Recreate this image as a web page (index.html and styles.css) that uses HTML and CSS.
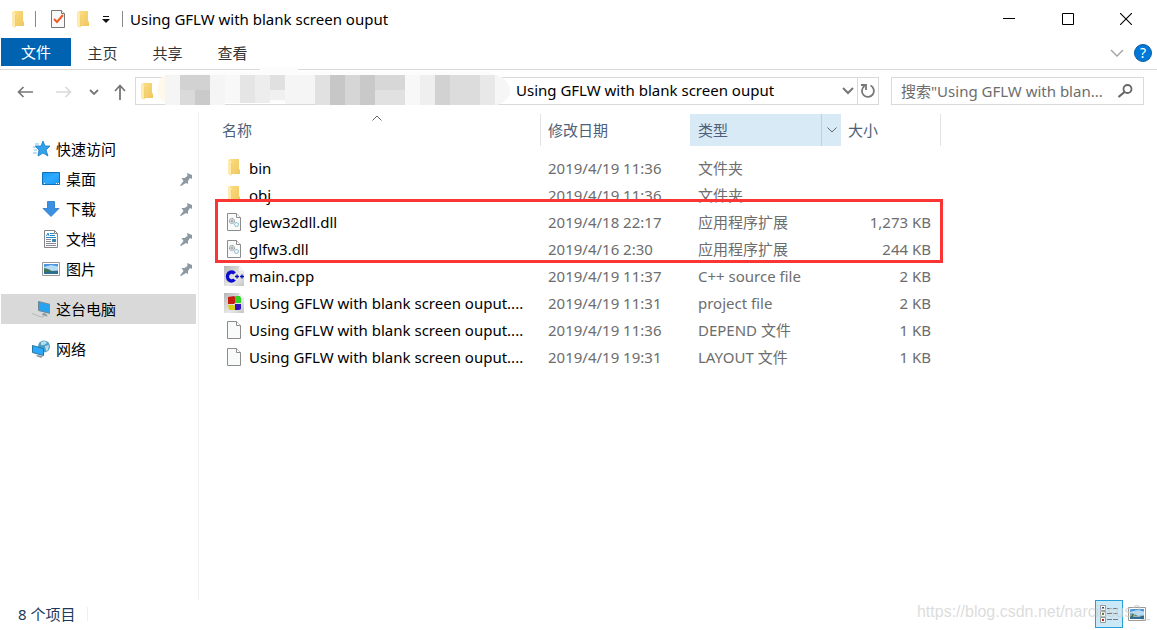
FILE: index.html
```html
<!DOCTYPE html>
<html lang="zh-CN">
<head>
<meta charset="utf-8">
<title>Using GFLW with blank screen ouput</title>
<link rel="stylesheet" href="styles.css">
</head>
<body>
<svg class="defs" aria-hidden="true">
  <defs>
    <linearGradient id="gold" x1="0" x2="1" y1="0" y2="1"><stop offset="0" stop-color="#fbdc80"/><stop offset="1" stop-color="#efc75f"/></linearGradient>
    <linearGradient id="blue" x1="0" x2="1" y1="0" y2="1"><stop offset="0" stop-color="#1199fb"/><stop offset=".5" stop-color="#2fa9ff"/><stop offset="1" stop-color="#1596f5"/></linearGradient>
    <linearGradient id="grey" x1="0" x2="1" y1="0" y2="1"><stop offset="0" stop-color="#b5b5b5"/><stop offset=".6" stop-color="#e9e9e9"/><stop offset="1" stop-color="#c4c4c4"/></linearGradient>
    <symbol id="folder" viewBox="0 0 14 18"><path d="M3 1h9v10l1 1v4H3z" fill="url(#gold)"/><path d="M1 1l2 1 2 2v12l-1 2-3-2z" fill="#ffe9ae"/><path d="M4 4l1 1v11l-1 1z" fill="#f3cf73"/></symbol>
    <symbol id="page" viewBox="0 0 16 20"><path d="M1.500 1.500h9l4 4v13h-13z" fill="#f9fafa" stroke="#8c8c8c"/><path d="M10.500 1.500v4h4" fill="#fff" stroke="#8c8c8c"/></symbol>
    <symbol id="dll" viewBox="0 0 16 20"><use href="#page" width="16" height="20"/><circle cx="6" cy="9" r="2.600" fill="#e8ecee" stroke="#7c858b" stroke-dasharray="1.200 .5"/><circle cx="6" cy="9" r="1" fill="#fff" stroke="#798288" stroke-width=".8"/><circle cx="10.500" cy="12.500" r="2" fill="#e2f2f8" stroke="#6faac5" stroke-dasharray="1.200 .4"/><circle cx="10.500" cy="12.500" r=".7" fill="#fff"/></symbol>
    <symbol id="cpp" viewBox="0 0 20 20"><path d="M0 0h15l5 5v15H0z" fill="url(#grey)"/><path d="M15 0v5h5z" fill="#f4f4f4"/><path d="M10.500 7.500A4 4.500 0 1 0 10.500 13.500" fill="none" stroke="#0d0dd0" stroke-width="3.400"/><path d="M11 10.500h4m-2-2v4m3-2h4m-2-2v4" stroke="#0d0dc0" stroke-width="1.300"/></symbol>
    <symbol id="project" viewBox="0 0 20 20"><path d="M0 0h15l5 5v15H0z" fill="url(#grey)"/><path d="M15 0v5h5z" fill="#f4f4f4"/><path d="M4 4l6-1 1 1v6l-1 1H4z" fill="#c81c10"/><path d="M11 3l5 0 1 2v5h-6z" fill="#32d428"/><path d="M4 12h6l1 1v4l-6 0z" fill="#d5cf18"/><path d="M11 11h6v5l-2 1h-4z" fill="#3114bd"/></symbol>
    <symbol id="pin" viewBox="0 0 14 14"><path d="M8 1l5 2v4l-2-1-2 3v3L7 11 2 14l-1-.500L4.500 9 2.500 6l3 0L8.500 4z" fill="#8c99a2"/></symbol>
    <symbol id="picture" viewBox="0 0 18 14"><path d="M.5.500h17v13H.5z" fill="#fff" stroke="#999"/><path d="M2 2h14v10H2z" fill="#b5dcf6"/><path d="M2 2h14v2.500L9 3 2 5z" fill="#4c95df"/><path d="M2 6l4 1 4 2 6-.5V10H2z" fill="#42745c"/><path d="M2 10l14-1v3H2z" fill="#2d6e93"/></symbol>
  </defs>
</svg>

<div class="window">
  <header class="titlebar">
    <svg class="i-folder"><use href="#folder"/></svg>
    <span class="sep first"></span>
    <button class="plain" aria-label="属性"><svg class="i-page" viewBox="0 0 16 20"><path d="M1.500 1.500h10l3 3v14h-13z" fill="#f8f8f8" stroke="#777"/><path d="M11.500 1.500v3h3" fill="#fff" stroke="#777"/><path d="M4 10l3 3 6-7" fill="none" stroke="#f15a22" stroke-width="2"/></svg></button>
    <button class="plain new-folder" aria-label="新建文件夹"><svg class="i-folder"><use href="#folder"/></svg></button>
    <button class="plain quick" aria-label="自定义快速访问工具栏"><svg width="8" height="8" viewBox="0 0 8 8"><path d="M1 1h6v1H1zM0 4h8L4 8z" fill="#111"/></svg></button>
    <span class="sep last"></span>
    <h1>Using GFLW with blank screen ouput</h1>
    <div class="controls">
      <button class="plain" aria-label="最小化"><svg viewBox="0 0 12 12"><path d="M0 5.500h12" stroke="#000"/></svg></button>
      <button class="plain" aria-label="最大化"><svg viewBox="0 0 12 12"><path d="M.5.500h11v11H.5z" fill="none" stroke="#000"/></svg></button>
      <button class="plain" aria-label="关闭"><svg viewBox="0 0 12 12"><path d="M0 0l12 12M12 0L0 12" stroke="#000" stroke-width="1.100"/></svg></button>
    </div>
  </header>

  <nav class="ribbon" aria-label="功能区">
    <button class="file">文件</button>
    <button>主页</button>
    <button>共享</button>
    <button>查看</button>
    <div class="ribbon-end">
      <button class="plain" aria-label="展开功能区"><svg width="14" height="8" viewBox="0 0 14 8"><path d="M1 1l6 6 6-6" fill="none" stroke="#a0a0a0" stroke-width="1.300"/></svg></button>
      <button class="help" aria-label="帮助">?</button>
    </div>
  </nav>

  <div class="navbar">
    <div class="arrows">
      <button class="plain" aria-label="后退"><svg width="16" height="12" viewBox="0 0 16 12"><path d="M16 6H1.500M6.500 1l-5 5 5 5" fill="none" stroke="#777" stroke-width="1.700"/></svg></button>
      <button class="plain" aria-label="前进"><svg width="16" height="12" viewBox="0 0 16 12"><path d="M0 6h14.500M9.500 1l5 5-5 5" fill="none" stroke="#d9d9d9" stroke-width="1.700"/></svg></button>
      <button class="plain recent" aria-label="最近浏览的位置"><svg width="10" height="6" viewBox="0 0 10 6"><path d="M1 1l4 4 4-4" fill="none" stroke="#777" stroke-width="1.800"/></svg></button>
      <button class="plain up" aria-label="上移"><svg width="12" height="16" viewBox="0 0 12 16"><path d="M6 16V1.500M1 7l5-5.500L11 7" fill="none" stroke="#777" stroke-width="1.800"/></svg></button>
    </div>
    <div class="address">
      <svg class="i-folder"><use href="#folder"/></svg>
      <svg class="mosaic" viewBox="0 0 350 38" shape-rendering="crispEdges" aria-hidden="true">
        <path d="M103 0h38v5h190c12 2 19 8 19 17s-7 14-17 14H18C-3 36-5 9 15 7l88-3z" fill="#fcfcfc" shape-rendering="auto"/>
        <path d="M0 22q1-12 10-15v30Q1 33 0 22z" fill="#fff9ec" shape-rendering="auto"/>
        <g id="cells">
          <path d="M8 8h15v30H8zM53 8h15v30H53zM128 8h30v29h-30z" fill="#f5f5f5"/>
          <path d="M23 8h15v15H23zM38 8h15v15H38z" fill="#d2d2d2"/>
          <path d="M23 23h15v15H23z" fill="#dadada"/><path d="M38 23h15v15H38z" fill="#cacaca"/>
          <path d="M68 8h15v28H68z" fill="#f8f8f8"/><path d="M83 8h15v28H83z" fill="#e5e5e5"/><path d="M98 8h15v28H98z" fill="#ededed"/>
          <path d="M113 8h15v15h-15z" fill="#e0e0e0"/><path d="M113 23h15v10h-15z" fill="#f0f0f0"/>
          <path d="M158 8h15v30h-15z" fill="#e1e1e1"/><path d="M173 8h15v30h-15z" fill="#c7c7c7"/><path d="M188 8h15v30h-15z" fill="#d6d6d6"/><path d="M203 8h15v30h-15z" fill="#c9c9c9"/>
          <path d="M218 8h30v15h-30z" fill="#d7d7d7"/><path d="M218 23h30v15h-30z" fill="#e1e1e1"/>
          <path d="M248 8h15v30h-15z" fill="#f8f8f8"/><path d="M263 8h15v30h-15z" fill="#efefef"/><path d="M278 8h15v30h-15z" fill="#d2d2d2"/><path d="M293 8h30v30h-30z" fill="#dcdcdc"/><path d="M323 8h15v30h-15z" fill="#e8e8e8"/>
        </g>
        <path d="M338 8c8 0 15 9 15 16s-8 14-15 14z" fill="#f6f6f6" shape-rendering="auto"/>
      </svg>
      <span class="crumb">Using GFLW with blank screen ouput</span>
      <button class="plain drop" aria-label="以前的位置"><svg width="12" height="8" viewBox="0 0 12 8"><path d="M1 1l5 5 5-5" fill="none" stroke="#777" stroke-width="2"/></svg></button>
      <button class="plain refresh" aria-label="刷新"><svg width="16" height="16" viewBox="0 0 16 16"><path d="M10.500 2.500a6 6 0 1 1-6 .5" fill="none" stroke="#777" stroke-width="1.800"/><path d="M1 2h5v5" fill="none" stroke="#777" stroke-width="1.800"/></svg></button>
    </div>
    <div class="search">
      <input type="text" aria-label="搜索" placeholder='搜索"Using GFLW with blan...'>
      <svg width="16" height="14" viewBox="0 0 16 14"><circle cx="10.500" cy="5" r="4" fill="none" stroke="#666" stroke-width="1.800"/><path d="M7.500 8l-6 5" stroke="#666" stroke-width="2.200"/></svg>
    </div>
  </div>

  <div class="body">
    <nav class="sidebar" aria-label="导航窗格">
      <a href="#" class="root"><svg viewBox="0 0 18 18"><path d="M11 1l2 5h5l-4 4 2 6-5-3-5 3 1-6-4-4h6z" fill="#32a2ea" stroke="#1779c4" stroke-width=".8"/><path d="M3 4h4M1 7h3M2 10h3M1 13h4" stroke="#79bff0"/></svg>快速访问</a>
      <a href="#"><svg viewBox="0 0 18 18"><path d="M.5 2.500h17v12H.5z" fill="url(#blue)" stroke="#0f70b5"/><path d="M2 13.500h1m11 0h1m1 0h1" stroke="#fff"/></svg>桌面<svg class="pin"><use href="#pin"/></svg></a>
      <a href="#"><svg viewBox="0 0 18 18"><path d="M5.500 1.500h7v7H17l-8 8-8-8h4.500z" fill="#3a91e4" stroke="#2875c3" stroke-width=".8"/></svg>下载<svg class="pin"><use href="#pin"/></svg></a>
      <a href="#"><svg viewBox="0 0 18 18"><path d="M2.500.500h10l3 3v14h-13z" fill="#fff" stroke="#858585"/><path d="M12.500.500v3h3" fill="none" stroke="#858585"/><path d="M8 3.500h4M8 5.500h5M4 7.500h10" stroke="#2989cf"/><path d="M4.500 6L6 3l1 3" fill="none" stroke="#2989cf"/><path d="M4 9.500h5M4 11.500h5M4 13.500h10M4 15.500h10" stroke="#889"/><path d="M10 9h4v3h-4z" fill="#3d87b8"/></svg>文档<svg class="pin"><use href="#pin"/></svg></a>
      <a href="#"><svg viewBox="0 -2 18 18"><use href="#picture" width="18" height="14"/></svg>图片<svg class="pin"><use href="#pin"/></svg></a>
      <a href="#" class="root current"><svg viewBox="0 0 18 18"><path d="M6.500 1.500l12 3v9l-12-3z" fill="#27a3f0" stroke="#6f8794"/><path d="M11 13l4 1-1 1 2 1-1 .5-5-1.500z" fill="#8c999f"/><path d="M0 13.500l9 3.500 3-.5" fill="none" stroke="#b3b9bd"/></svg>这台电脑</a>
      <a href="#" class="root"><svg viewBox="0 0 18 18"><circle cx="12" cy="6.500" r="6" fill="#4f9fc4"/><path d="M9 2l4-1 2 2-3 2-3 0zM13 6l4-1-1 5-2 1z" fill="#b4dfeb"/><path d="M.5 5.500l11 3v7l-11-3z" fill="#2aa8ff" stroke="#28759d"/><path d="M5 15l6 1-2 2-5-2z" fill="#8c999f"/></svg>网络</a>
    </nav>

    <main class="files">
      <table>
        <colgroup><col class="c-name"><col class="c-date"><col class="c-type"><col class="c-size"></colgroup>
        <thead>
          <tr>
            <th>名称<svg class="sort" width="10" height="6" viewBox="0 0 10 6"><path d="M.5 5.500L5 1l4.500 4.500" fill="none" stroke="#666"/></svg></th>
            <th>修改日期</th>
            <th class="hot"><div class="hot-in">类型<button class="plain" aria-label="筛选类型"><svg width="10" height="6" viewBox="0 0 10 6"><path d="M.5.500L5 5 9.500.500" fill="none" stroke="#666"/></svg></button></div></th>
            <th>大小</th>
          </tr>
        </thead>
        <tbody>
          <tr><td><svg class="f"><use href="#folder"/></svg>bin</td><td>2019/4/19 11:36</td><td>文件夹</td><td></td></tr>
          <tr><td><svg class="f"><use href="#folder"/></svg>obj</td><td>2019/4/19 11:36</td><td>文件夹</td><td></td></tr>
          <tr><td><svg class="p"><use href="#dll"/></svg>glew32dll.dll</td><td>2019/4/18 22:17</td><td>应用程序扩展</td><td>1,273 KB</td></tr>
          <tr><td><svg class="p"><use href="#dll"/></svg>glfw3.dll</td><td>2019/4/16 2:30</td><td>应用程序扩展</td><td>244 KB</td></tr>
          <tr><td><svg><use href="#cpp"/></svg>main.cpp</td><td>2019/4/19 11:37</td><td>C++ source file</td><td>2 KB</td></tr>
          <tr><td><svg><use href="#project"/></svg>Using GFLW with blank screen ouput....</td><td>2019/4/19 11:31</td><td>project file</td><td>2 KB</td></tr>
          <tr><td><svg class="p"><use href="#page"/></svg>Using GFLW with blank screen ouput....</td><td>2019/4/19 11:36</td><td>DEPEND 文件</td><td>1 KB</td></tr>
          <tr><td><svg class="p"><use href="#page"/></svg>Using GFLW with blank screen ouput....</td><td>2019/4/19 19:31</td><td>LAYOUT 文件</td><td>1 KB</td></tr>
        </tbody>
      </table>
      <div class="highlight"></div>
    </main>
  </div>

  <footer class="status">
    <span class="count">8 个项目</span>
    <div class="views">
      <button class="view on" aria-label="详细信息"><svg width="18" height="18" viewBox="0 0 18 18"><path d="M.5.500h5v5h-5zM.5 6.500h5v5h-5zM.5 12.500h5v5h-5z" fill="#fff" stroke="#999"/><path d="M2 2h2v2H2z" fill="#346"/><path d="M2 8h2v2H2z" fill="#5a7c2e"/><path d="M2 14h2v2H2z" fill="#b32218"/><path d="M7 3.500h5m1 0h5M7 8.500h5m1 0h5M7 14.500h5m1 0h5" stroke="#777"/></svg></button>
      <button class="view" aria-label="大缩略图"><svg width="18" height="14"><use href="#picture"/></svg></button>
    </div>
    <span class="watermark">https://blog.csdn.net/narcissus2_</span>
  </footer>
</div>
</body>
</html>
```
FILE: styles.css
```css
* { box-sizing: border-box; }

body {
  margin: 0;
  background: #fff;
  color: #000;
  font: 15px/20px "Noto Sans", "Noto Sans CJK SC", sans-serif;
}

button, input { font: inherit; color: inherit; }
button { border: 0; background: none; padding: 0; }
svg { display: block; flex: none; }
.defs { position: absolute; width: 0; height: 0; }
.plain { display: flex; align-items: center; justify-content: center; }

.window { display: flex; flex-direction: column; min-height: 100vh; }

.i-folder { width: 14px; height: 18px; }
.i-page { width: 16px; height: 20px; }

/* Title bar */
.titlebar { display: flex; align-items: center; height: 38px; padding-left: 11px; }
.sep { width: 1px; height: 16px; background: #888; }
.sep.first { margin: 0 14px 0 10px; }
.sep.last { margin: 0 7px 0 12px; }
.new-folder { margin: 0 12px 0 10px; }
.titlebar h1 { margin: 0; font-size: 15px; font-weight: 400; white-space: nowrap; }
.controls { display: flex; margin-left: auto; padding-right: 2px; }
.controls button { width: 59px; height: 38px; }
.controls button:last-child { width: 58px; }
.controls svg { width: 12px; height: 12px; }

/* Ribbon */
.ribbon { display: flex; height: 32px; padding-left: 1px; border-bottom: 1px solid #dadada; }
.ribbon > button { width: 65px; height: 29px; color: #333; }
.ribbon > .file { width: 70px; height: 28px; margin-right: -1px; background: #0063b1; color: #fff; }
.ribbon-end { display: flex; align-items: center; gap: 10px; height: 30px; margin-left: auto; padding-right: 5px; }
.help {
  width: 18px; height: 18px; border-radius: 50%;
  border: 1px solid #0b5fa8; background: #0078d7; color: #fff;
  font-size: 14px; line-height: 16px;
}

/* Address row */
.navbar { display: flex; align-items: center; padding: 7px 13px 7px 17px; }
.arrows { display: flex; align-items: center; width: 118px; padding-top: 2px; gap: 23px; }
.recent { margin-left: -6px; }
.up { margin-left: -8px; }
.address {
  position: relative; flex: 1; display: flex; align-items: center;
  height: 28px; border: 1px solid #d9d9d9; padding-left: 4px;
}
.mosaic { position: absolute; left: 21px; top: -11px; width: 350px; height: 38px; overflow: visible; }
.crumb { flex: 1; padding: 0 0 2px 362px; white-space: nowrap; }
.drop { width: 18px; height: 26px; }
.refresh { width: 21px; height: 26px; border-left: 1px solid #d9d9d9; }
.search {
  display: flex; align-items: center; width: 253px; height: 28px;
  margin-left: 12px; padding: 0 10px 0 9px; border: 1px solid #d9d9d9;
}
.search input { flex: 1; min-width: 0; border: 0; padding: 0; outline: 0; background: none; }
.search input::placeholder { color: #6d6d6d; opacity: 1; }

/* Body */
.body { display: flex; flex: 1; }
.sidebar { width: 199px; padding: 22px 2px 0 1px; border-right: 1px solid #f0f0f0; }
.sidebar a {
  display: flex; align-items: center; gap: 6px; height: 30px;
  padding: 0 3px 0 41px; color: #000; text-decoration: none;
}
.sidebar a.root { padding-left: 31px; }
.sidebar a.current, .sidebar a.current + .root { margin-top: 10px; }
.sidebar .current { background: #d9d9d9; }
.sidebar svg { width: 18px; height: 18px; }
.sidebar .pin { width: 14px; height: 14px; margin-left: auto; }

.files { position: relative; flex: 1; padding: 2px 0 0 16px; }
table { border-collapse: separate; border-spacing: 0; table-layout: fixed; width: 726px; }
.c-name { width: 326px; }
.c-date { width: 149px; }
.c-type { width: 151px; }
.c-size { width: 100px; }
th {
  height: 32px; padding: 0 0 0 7px; border-right: 1px solid #e3e3e3;
  color: #4c607a; font-weight: 400; text-align: left; position: relative;
}
th:nth-child(2), th.hot { border-right: 0; }
th.hot { padding-left: 8px; background: #d9eaf7; }
.hot-in { display: flex; align-items: center; justify-content: space-between; }
.hot button { width: 20px; height: 32px; border-left: 1px solid #bdd0df; }
.sort { position: absolute; left: 157px; top: 1px; }
thead::after { content: ""; display: block; height: 8px; }
td { height: 27px; padding: 0 0 0 7px; color: #6d6d6d; white-space: nowrap; }
td:nth-child(3) { padding-left: 8px; }
td:first-child { display: flex; align-items: center; gap: 5px; padding-left: 9px; color: #000; }
td:last-child { padding: 0 10px 0 0; text-align: right; }
td svg { width: 20px; height: 20px; }
td .f { width: 14px; height: 18px; margin: 0 3px 2px; }
td .p { width: 16px; height: 20px; margin: 0 2px; }
.highlight {
  position: absolute; left: 16px; top: 87px; width: 728px; height: 64px;
  border: 3px solid #fa3534; pointer-events: none;
}

/* Status bar */
.status { position: relative; display: flex; align-items: center; height: 30px; padding: 0 6px 2px 18px; }
.count { padding-right: 12px; border-right: 1px solid #efefef; color: #1e395b; line-height: 14px; }
.views { display: flex; margin-left: auto; }
.view { display: flex; align-items: center; justify-content: center; width: 28px; height: 28px; }
.view.on { border: 1px solid #26a0da; background: #cbe8f6; }
.watermark {
  position: absolute; right: 7px; top: 2px; color: rgba(205, 205, 205, .7);
  font: 16px/20px "Liberation Sans", sans-serif; pointer-events: none;
}
```
